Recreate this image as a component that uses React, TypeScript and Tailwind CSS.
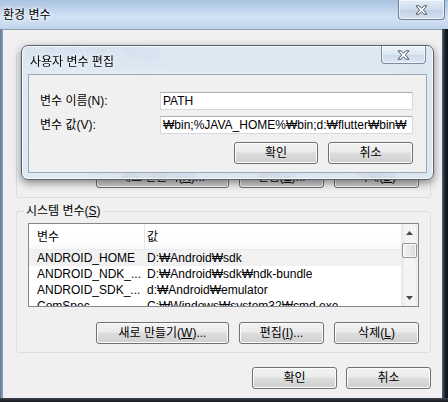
import React from "react";

const FONT = "font-['Liberation_Sans','Noto_Sans_CJK_KR',sans-serif]";

function CloseGlyph() {
  return (
    <svg width="13" height="10" viewBox="0 0 13 10">
      <polygon
        points="1,0.8 4.2,0.8 6.5,3.3 8.8,0.8 12,0.8 8.4,5 12,9.2 8.8,9.2 6.5,6.7 4.2,9.2 1,9.2 4.6,5"
        fill="#ffffff"
        stroke="#4b5868"
        strokeWidth="1"
        strokeLinejoin="round"
      />
    </svg>
  );
}

function Btn({ children, w }: { children: React.ReactNode; w: string }) {
  return (
    <div
      className={`${w} h-[22px] shrink-0 rounded-[3px] border border-[#707070] bg-[linear-gradient(180deg,#f2f2f2_0%,#ebebeb_45%,#dddddd_50%,#cfcfcf_100%)] shadow-[inset_0_0_0_1px_#fcfcfc] flex items-center justify-center leading-[14px] whitespace-nowrap`}
    >
      {children}
    </div>
  );
}

function UpArrow() {
  return (
    <svg width="7" height="4" viewBox="0 0 7 4">
      <polygon points="3.5,0 7,4 0,4" fill="#4a4a4a" />
    </svg>
  );
}
function DownArrow() {
  return (
    <svg width="7" height="4" viewBox="0 0 7 4">
      <polygon points="0,0 7,0 3.5,4" fill="#4a4a4a" />
    </svg>
  );
}

type Row = { name: string; value: string; sel?: boolean };

function ListView({ h, rows, header = true }: { h: string; rows: Row[]; header?: boolean }) {
  return (
    <div className={`${h} mx-[11px] mt-[5px] border border-[#828790] bg-white flex overflow-hidden`}>
      <div className="flex-1 min-w-0 flex flex-col overflow-hidden">
        <div className="h-[26px] shrink-0 flex items-center bg-[linear-gradient(180deg,#ffffff_0%,#ffffff_60%,#f7f8f9_100%)] border-b border-[#ececec]">
          <div className="w-[116px] h-full pl-[8px] flex items-center border-r border-[#e3e5e8]">{header ? "변수" : ""}</div>
          <div className="pl-[2px]">{header ? "값" : ""}</div>
        </div>
        {rows.map((r) => (
          <div
            key={r.name}
            className={`h-[16px] shrink-0 flex items-center leading-[16px] whitespace-nowrap ${r.sel ? "bg-[#f1f1f1]" : ""}`}
          >
            <div className="w-[117px] pl-[8px] overflow-hidden">{r.name}</div>
            <div className="pl-[1px] overflow-hidden">{r.value}</div>
          </div>
        ))}
      </div>
      <div className="w-[17px] shrink-0 flex flex-col bg-[linear-gradient(90deg,#e6e6e6,#f4f4f4_25%,#f4f4f4_80%,#ebebeb)]">
        <div className="h-[17px] flex items-center justify-center">
          <UpArrow />
        </div>
        <div className="mx-[1px] mt-[2px] h-[15px] rounded-[2px] border border-[#959595] bg-[linear-gradient(90deg,#f3f3f3,#e8e8e8_50%,#d9d9d9)] shadow-[inset_0_0_0_1px_#fbfbfb]" />
        <div className="flex-1" />
        <div className="h-[17px] flex items-center justify-center">
          <DownArrow />
        </div>
      </div>
    </div>
  );
}

export default function App() {
  const sysRows: Row[] = [
    { name: "ANDROID_HOME", value: "D:₩Android₩sdk", sel: true },
    { name: "ANDROID_NDK_...", value: "D:₩Android₩sdk₩ndk-bundle" },
    { name: "ANDROID_SDK_...", value: "d:₩Android₩emulator" },
    { name: "ComSpec", value: "C:₩Windows₩system32₩cmd.exe" },
  ];

  return (
    <div className={`relative w-[448px] h-[402px] overflow-hidden bg-[#1f252e] text-[12px] text-black ${FONT}`}>
      <div className="flex flex-col h-full">
        {/* Title bar */}
        <div className="h-[29px] shrink-0 flex justify-between items-start bg-[linear-gradient(180deg,#a9c3e1_0%,#c4d8ee_40%,#d3e3f4_60%,#bfd3ea_100%)]">
          <span className="ml-[3px] mt-[8px] leading-[14px] [text-shadow:0_0_5px_#ffffff,0_0_3px_#ffffff]">환경 변수</span>
          <div className="mr-[3px] w-[47px] h-[20px] rounded-b-[4px] border border-t-0 border-[#6e819a] bg-[linear-gradient(180deg,#e4edf7_0%,#cddcec_50%,#bfd0e4_51%,#d4e2f1_100%)] shadow-[inset_0_0_0_1px_rgba(255,255,255,0.6)] flex items-center justify-center">
            <CloseGlyph />
          </div>
        </div>

        {/* Body */}
        <div className="flex h-[369px] shrink-0">
          <div className="w-[3px] bg-[linear-gradient(90deg,#5d7591,#8fa6c0)]" />
          <div className="w-[439px] bg-[#f0f0f0] border-t border-[#8d9db0] flex flex-col pl-[13px] pr-[11px]">
            <fieldset className="mt-[16px] h-[152px] shrink-0 m-0 p-0 min-w-0 border border-[#d5dfe5] rounded-[3px]">
              <legend className="ml-[7px] px-[2px] leading-[14px] text-[#5a6a80]">
                kim에 대한 사용자 변수(<span className="underline">U</span>)
              </legend>
              <ListView h="h-[86px]" rows={[]} header={false} />
              <div className="mx-[11px] mt-[15px] flex justify-end gap-[10px]">
                <Btn w="w-[133px]">
                  새로 만들기(<span className="underline">N</span>)...
                </Btn>
                <Btn w="w-[85px]">
                  편집(<span className="underline">E</span>)...
                </Btn>
                <Btn w="w-[85px]">
                  삭제(<span className="underline">D</span>)
                </Btn>
              </div>
            </fieldset>

            <fieldset className="mt-[6px] h-[149px] shrink-0 m-0 p-0 min-w-0 border border-[#d5dfe5] rounded-[3px]">
              <legend className="ml-[7px] px-[2px] leading-[14px]">
                시스템 변수(<span className="underline">S</span>)
              </legend>
              <ListView h="h-[84px]" rows={sysRows} />
              <div className="mx-[11px] mt-[15px] flex justify-end gap-[10px]">
                <Btn w="w-[133px]">
                  새로 만들기(<span className="underline">W</span>)...
                </Btn>
                <Btn w="w-[85px]">
                  편집(<span className="underline">I</span>)...
                </Btn>
                <Btn w="w-[85px]">
                  삭제(<span className="underline">L</span>)
                </Btn>
              </div>
            </fieldset>

            <div className="mt-[14px] flex justify-end gap-[9px]">
              <Btn w="w-[85px]">확인</Btn>
              <Btn w="w-[85px]">취소</Btn>
            </div>
          </div>
          <div className="flex-1 bg-[linear-gradient(90deg,#56677b,#1a212b_50%,#0d1117)]" />
        </div>
        <div className="flex-1 bg-[linear-gradient(180deg,#3b434e,#14181e)]" />
      </div>

      {/* Edit user variable dialog */}
      <div className="absolute left-[21px] top-[45px] w-[413px] h-[135px] rounded-[7px] border border-[#56636f] bg-[rgba(218,231,244,0.82)] backdrop-blur-[4px] shadow-[inset_0_0_0_1px_rgba(255,255,255,0.75),0_3px_9px_rgba(0,0,0,0.45)] flex flex-col">
        <div className="h-[28px] shrink-0 flex justify-between items-start">
          <span className="ml-[8px] mt-[9px] leading-[14px] [text-shadow:0_0_5px_#ffffff]">사용자 변수 편집</span>
          <div className="mr-[7px] w-[45px] h-[18px] rounded-b-[4px] border border-t-0 border-[#7a8ca2] bg-[linear-gradient(180deg,#eef4fa_0%,#dae6f2_50%,#cbdaea_51%,#dde8f4_100%)] shadow-[inset_0_0_0_1px_rgba(255,255,255,0.6)] flex items-center justify-center">
            <CloseGlyph />
          </div>
        </div>
        <div className="mx-[6px] h-[99px] shrink-0 border border-[#9aa8b7] bg-[#f0f0f0] flex flex-col">
          <div className="mt-[17px] pl-[11px] flex items-center">
            <span className="w-[120px] shrink-0 leading-[14px]">변수 이름(N):</span>
            <div className="w-[253px] h-[18px] border border-[#d5d8de] border-t-[#abadb3] bg-white pl-[2px] leading-[16px] whitespace-nowrap overflow-hidden">
              PATH
            </div>
          </div>
          <div className="mt-[6px] pl-[11px] flex items-center">
            <span className="w-[120px] shrink-0 leading-[14px]">변수 값(V):</span>
            <div className="w-[253px] h-[18px] border border-[#d5d8de] border-t-[#abadb3] bg-white pl-[2px] leading-[16px] whitespace-nowrap overflow-hidden">
              ₩bin;%JAVA_HOME%₩bin;d:₩flutter₩bin₩
            </div>
          </div>
          <div className="mt-[8px] pr-[13px] flex justify-end gap-[10px]">
            <Btn w="w-[84px]">확인</Btn>
            <Btn w="w-[85px]">취소</Btn>
          </div>
        </div>
      </div>
    </div>
  );
}
